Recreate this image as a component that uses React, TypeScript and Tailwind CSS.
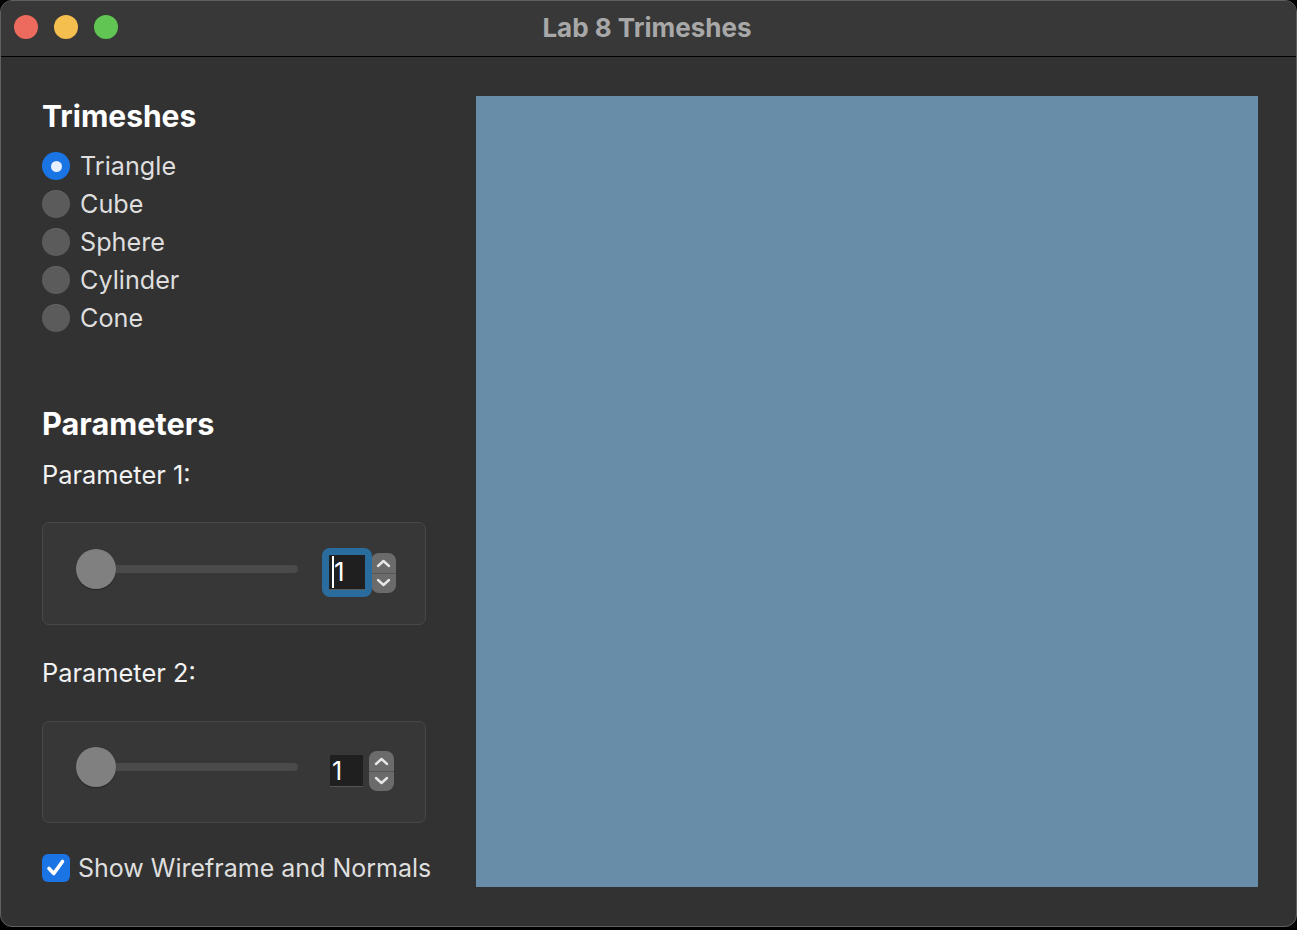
import React from "react";

function Chevrons() {
  return (
    <svg width="25" height="40" viewBox="0 0 25 40" className="block">
      <path d="M7 13 L12.5 8 L18 13" fill="none" stroke="#e6e6e6" strokeWidth="2.4" strokeLinecap="round" strokeLinejoin="round" />
      <path d="M7 27 L12.5 32 L18 27" fill="none" stroke="#e6e6e6" strokeWidth="2.4" strokeLinecap="round" strokeLinejoin="round" />
    </svg>
  );
}

function Stepper({ className }: { className?: string }) {
  return (
    <div className={"relative w-[25px] h-[40px] rounded-[8px] bg-[#6b6b6b] overflow-hidden " + (className ?? "")}>
      <div className="absolute left-0 right-0 top-[19.5px] h-[1px] bg-[#555555]" />
      <div className="absolute inset-0">
        <Chevrons />
      </div>
    </div>
  );
}

function Slider({ className }: { className?: string }) {
  return (
    <div className={"relative w-[222px] h-[40px] shrink-0 " + (className ?? "")}>
      <div className="absolute left-[6px] right-0 top-[16px] h-[8px] rounded-full bg-[#4a4a4a]" />
      <div className="absolute left-0 top-0 w-[40px] h-[40px] rounded-full bg-[#808080] shadow-[0_1px_1px_rgba(0,0,0,0.35)]" />
    </div>
  );
}

function Radio({ label, checked }: { label: string; checked?: boolean }) {
  return (
    <div className="h-[38px] flex items-center gap-[10px]">
      {checked ? (
        <div className="w-[28px] h-[28px] rounded-full bg-[#1b74e4] flex items-center justify-center shrink-0">
          <div className="w-[11px] h-[11px] rounded-full bg-[#e6efff]" />
        </div>
      ) : (
        <div className="w-[28px] h-[28px] rounded-full bg-[#5b5b5b] shadow-[inset_0_1px_0_rgba(255,255,255,0.06)] shrink-0" />
      )}
      <span className="text-[25.2px] leading-[38px] text-[#dedede]">{label}</span>
    </div>
  );
}

export default function App() {
  return (
    <div className="w-[1297px] h-[930px] bg-black font-['Inter',sans-serif]">
      <div className="w-[1297px] h-[927px] rounded-[12px] border border-[#606060] overflow-hidden flex flex-col bg-[#323232]">
        <div className="relative h-[56px] shrink-0 bg-[#383838] border-b border-black flex items-center justify-center">
          <div className="absolute left-[13px] top-[14px] flex gap-[16px]">
            <div className="w-[24px] h-[24px] rounded-full bg-[#ed6a5e]" />
            <div className="w-[24px] h-[24px] rounded-full bg-[#f5bf4f]" />
            <div className="w-[24px] h-[24px] rounded-full bg-[#61c554]" />
          </div>
          <span className="text-[26px] font-bold text-[#a8a8a8] leading-[30px] -mt-[2px] -ml-[3px]">Lab 8 Trimeshes</span>
        </div>
        <div className="flex flex-1">
          <div className="w-[475px] shrink-0 pl-[41px] pt-[41px] flex flex-col">
            <div className="h-[36px] text-[30px] font-bold leading-[36px] text-white">Trimeshes</div>
            <div className="mt-[13px] flex flex-col">
              <Radio label="Triangle" checked />
              <Radio label="Cube" />
              <Radio label="Sphere" />
              <Radio label="Cylinder" />
              <Radio label="Cone" />
            </div>
            <div className="mt-[69px] h-[36px] text-[30.7px] font-bold leading-[36px] text-white">Parameters</div>
            <div className="mt-[18px] h-[30px] text-[25.4px] leading-[30px] text-[#f2f2f2]">Parameter 1:</div>
            <div className="mt-[32px] w-[384px] h-[103px] rounded-[7px] border border-[#484848] bg-[#373737] flex items-start">
              <Slider className="ml-[33px] mt-[26px]" />
              <div className="ml-[24px] mt-[25px] w-[50px] h-[49px] rounded-[8px] bg-[#2a6c9d] p-[7px] relative z-10">
                <div className="relative w-[36px] h-[35px] bg-[#1f1f1f] border-b border-[#5a5a5a]">
                  <div className="absolute left-[3px] top-[1px] w-[2px] h-[32px] bg-white" />
                  <span className="absolute left-[5px] top-[0px] text-[26px] leading-[34px] text-white">1</span>
                </div>
              </div>
              <Stepper className="mt-[30px] -ml-[1px]" />
            </div>
            <div className="mt-[33px] h-[30px] text-[25.4px] leading-[30px] text-[#f2f2f2]">Parameter 2:</div>
            <div className="mt-[33px] w-[384px] h-[102px] rounded-[7px] border border-[#484848] bg-[#373737] flex items-start">
              <Slider className="ml-[33px] mt-[25px]" />
              <div className="ml-[32px] mt-[33px] w-[33px] h-[32px] bg-[#1f1f1f] border-b border-[#555555] relative">
                <span className="absolute left-[2px] top-0 text-[25px] leading-[32px] text-white">1</span>
              </div>
              <Stepper className="mt-[29px] ml-[6px]" />
            </div>
            <div className="mt-[26px] h-[38px] flex items-center gap-[8px]">
              <div className="w-[28px] h-[28px] rounded-[6px] bg-[#1b74e4] flex items-center justify-center shrink-0">
                <svg width="22" height="22" viewBox="0 0 22 22">
                  <path d="M4 11.5 L8.8 16.5 L17.5 4.5" fill="none" stroke="white" strokeWidth="3.6" strokeLinecap="round" strokeLinejoin="round" />
                </svg>
              </div>
              <span className="text-[25px] leading-[38px] text-[#dedede] whitespace-nowrap">Show Wireframe and Normals</span>
            </div>
          </div>
          <div className="mt-[39px] w-[782px] h-[791px] bg-[#688da8]" />
        </div>
      </div>
    </div>
  );
}
